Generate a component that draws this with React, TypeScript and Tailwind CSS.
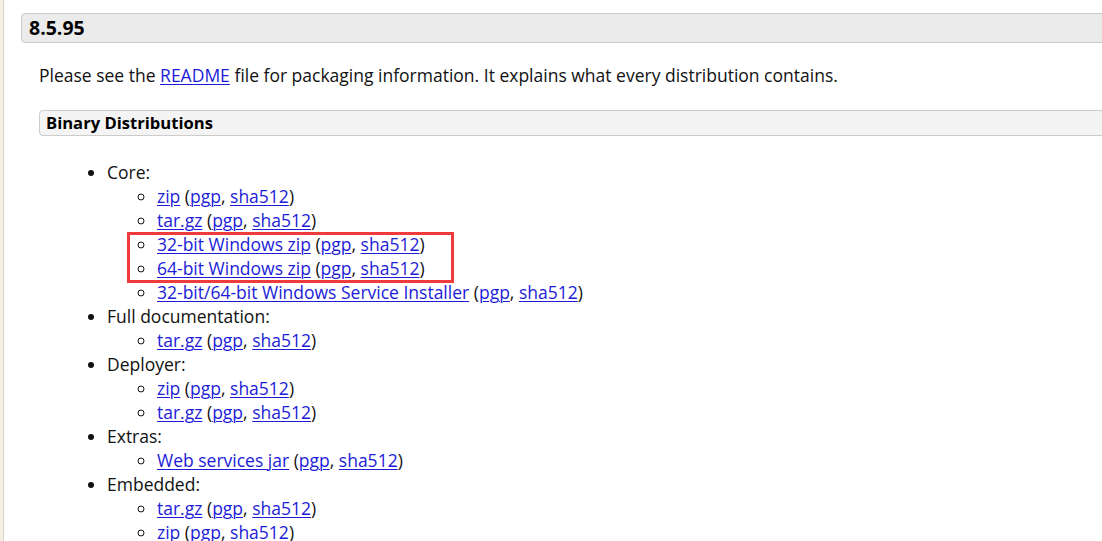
import React from "react";

const L = ({ children }: { children: React.ReactNode }) => (
  <a href="#" className="text-[#1c1cd8] underline underline-offset-[2px] decoration-1">
    {children}
  </a>
);

const Item = ({ name }: { name: string }) => (
  <li>
    <L>{name}</L> (<L>pgp</L>, <L>sha512</L>)
  </li>
);

export default function App() {
  return (
    <div
      className="w-[1102px] h-[541px] overflow-hidden bg-white flex text-[#111] text-[17.5px] leading-[24px]"
      style={{ fontFamily: '"Open Sans", "Noto Sans", sans-serif' }}
    >
      <div className="w-[4px] shrink-0 bg-[#f4efe4] border-r border-[#d9d1c1]" />
      <div className="flex-1 min-w-0 pl-[17px] pt-[13px]">
        <div className="w-[1100px] h-[30px] bg-[#ebebeb] border border-[#cccccc] rounded-[4px] pl-[7px] flex items-center text-[19.5px] font-bold text-black">
          8.5.95
        </div>
        <div className="pl-[18px]">
          <p className="mt-[20px]">
            Please see the <L>README</L> file for packaging information. It explains what every distribution contains.
          </p>
          <div className="mt-[23px] w-[1100px] h-[26px] bg-[#f4f4f4] border border-[#cccccc] rounded-[4px] pl-[6px] flex items-center text-[16.6px] font-bold text-black">
            Binary Distributions
          </div>
          <ul className="list-disc pl-[68px] mt-[24px]">
            <li>
              Core:
              <ul className="list-[circle] pl-[50px] relative">
                <Item name="zip" />
                <Item name="tar.gz" />
                <Item name="32-bit Windows zip" />
                <Item name="64-bit Windows zip" />
                <Item name="32-bit/64-bit Windows Service Installer" />
                <div className="absolute left-[20px] top-[48px] w-[327px] h-[51px] border-[3px] border-[#ef3b3b] pointer-events-none" />
              </ul>
            </li>
            <li>
              Full documentation:
              <ul className="list-[circle] pl-[50px]">
                <Item name="tar.gz" />
              </ul>
            </li>
            <li>
              Deployer:
              <ul className="list-[circle] pl-[50px]">
                <Item name="zip" />
                <Item name="tar.gz" />
              </ul>
            </li>
            <li>
              Extras:
              <ul className="list-[circle] pl-[50px]">
                <Item name="Web services jar" />
              </ul>
            </li>
            <li>
              Embedded:
              <ul className="list-[circle] pl-[50px]">
                <Item name="tar.gz" />
                <Item name="zip" />
              </ul>
            </li>
          </ul>
        </div>
      </div>
    </div>
  );
}
